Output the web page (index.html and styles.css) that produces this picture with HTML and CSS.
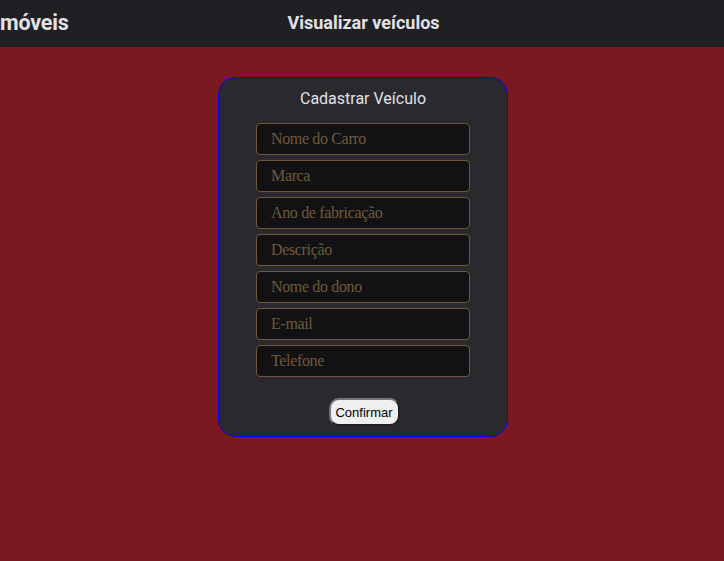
FILE: index.html
```html
<!DOCTYPE html>
<html lang="pt-BR">
<head>
<meta charset="utf-8">
<title>Cadastrar Veículo</title>
<link rel="stylesheet" href="styles.css">
</head>
<body>
<header class="topbar">
  <div class="brand">móveis</div>
  <nav class="nav"><a class="nav-link" href="#">Visualizar veículos</a></nav>
</header>
<main class="content">
  <form class="card">
    <h2 class="card-title">Cadastrar Veículo</h2>
    <div class="fields">
      <input class="field" type="text" placeholder="Nome do Carro">
      <input class="field" type="text" placeholder="Marca">
      <input class="field" type="text" placeholder="Ano de fabricação">
      <input class="field" type="text" placeholder="Descrição">
      <input class="field" type="text" placeholder="Nome do dono">
      <input class="field" type="text" placeholder="E-mail">
      <input class="field" type="text" placeholder="Telefone">
    </div>
    <button class="confirm" type="button">Confirmar</button>
  </form>
</main>
</body>
</html>
```
FILE: styles.css
```css
html, body {
  margin: 0;
  padding: 0;
  height: 100%;
}
body {
  background: #7b1921;
  font-family: Roboto, "Liberation Sans", sans-serif;
}
.topbar {
  height: 47px;
  background: #202024;
  display: flex;
  align-items: center;
  position: relative;
}
.brand {
  color: #e1e1e6;
  font-weight: 700;
  font-size: 21.5px;
  margin-top: -3px;
  letter-spacing: -0.2px;
}
.nav {
  position: absolute;
  left: 0;
  right: 0;
  text-align: center;
  top: 12px;
}
.nav-link {
  color: #e1e1e6;
  font-weight: 700;
  font-size: 18px;
  text-decoration: none;
  margin-left: 3px;
}
.content {
  display: flex;
  justify-content: center;
  padding-top: 30px;
}
.card {
  width: 288px;
  height: 358px;
  box-sizing: content-box;
  background: #29292e;
  border: 1px solid #0000ff;
  border-radius: 18px;
  display: flex;
  flex-direction: column;
  align-items: center;
  margin-left: 2px;
}
.card-title {
  margin: 11px 0 0;
  font-weight: 400;
  font-size: 16px;
  line-height: 20px;
  color: #e1e1e6;
}
.fields {
  margin-top: 14px;
  display: flex;
  flex-direction: column;
  gap: 5px;
}
.field {
  width: 214px;
  height: 32px;
  box-sizing: border-box;
  background: #121214;
  border: 1px solid #6e5a3a;
  border-radius: 4px;
  padding: 0 14px;
  font-family: "Liberation Serif", serif;
  font-size: 16px;
  letter-spacing: -0.35px;
  color: #c4c4cc;
  outline: none;
}
.field::placeholder {
  color: #6e5a3a;
  opacity: 1;
}
.confirm {
  margin-top: 21px;
  margin-left: 2px;
  width: 71px;
  height: 28px;
  box-sizing: border-box;
  padding: 0;
  background: #efefef;
  border: 2px solid #767676;
  border-style: outset;
  border-radius: 10px;
  font-family: "Liberation Sans", Arial, sans-serif;
  font-size: 13px;
  color: #000;
}
```
